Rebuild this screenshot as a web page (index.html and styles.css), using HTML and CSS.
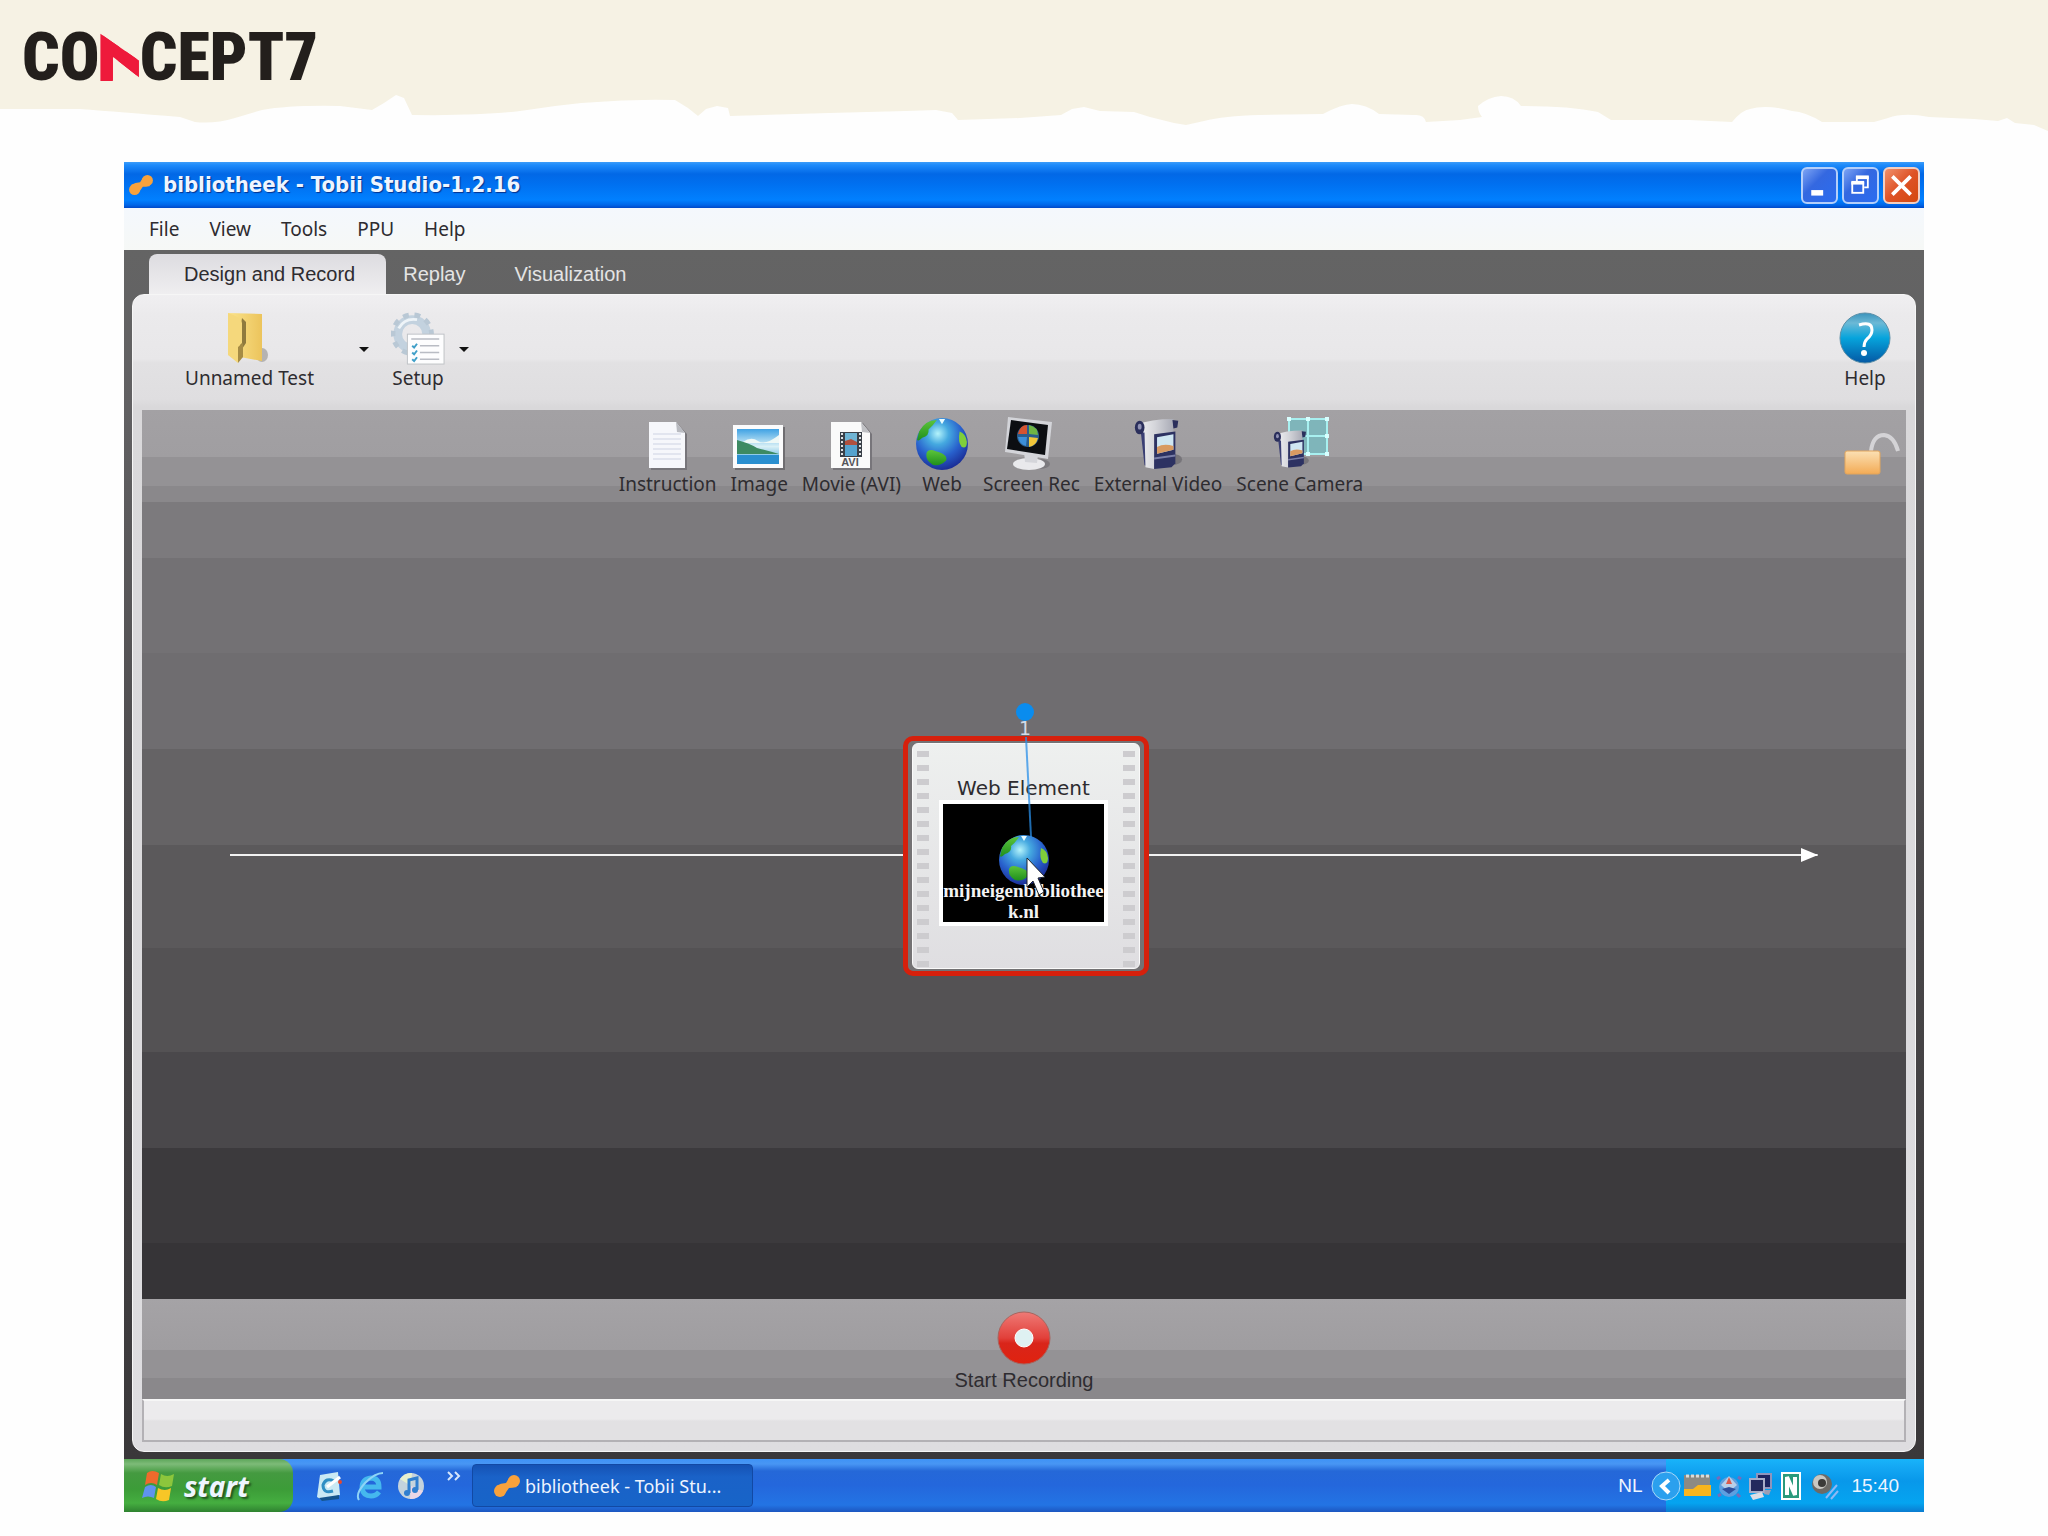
FILE: index.html
```html
<!DOCTYPE html>
<html lang="nl">
<head>
    <meta charset="UTF-8">
    <meta name="viewport" content="width=device-width, initial-scale=1.0">
    <title>bibliotheek - Tobii Studio</title>
    <link rel="stylesheet" href="styles.css">
</head>
<body>
    <!-- shared icons -->
    <svg class="defs" width="0" height="0" aria-hidden="true">
        <defs>
            <radialGradient id="sea" cx="0.42" cy="0.3" r="0.7">
                <stop offset="0" stop-color="#b4f3fb"/>
                <stop offset="0.3" stop-color="#45a9e0"/>
                <stop offset="0.65" stop-color="#2860cc"/>
                <stop offset="1" stop-color="#1b2f98"/>
            </radialGradient>
            <linearGradient id="land" x1="0" y1="0" x2="0" y2="1">
                <stop offset="0" stop-color="#5cc43a"/>
                <stop offset="1" stop-color="#1f8f1c"/>
            </linearGradient>
            <linearGradient id="body" x1="0" y1="0" x2="1" y2="0">
                <stop offset="0" stop-color="#f4f4f6"/>
                <stop offset="0.5" stop-color="#d4d5da"/>
                <stop offset="1" stop-color="#a9abb6"/>
            </linearGradient>
            <linearGradient id="sky" x1="0" y1="0" x2="0" y2="1">
                <stop offset="0" stop-color="#3fa2e4"/>
                <stop offset="0.5" stop-color="#d9f0f6"/>
                <stop offset="1" stop-color="#3aa0d8"/>
            </linearGradient>
            <linearGradient id="folder" x1="0" y1="0" x2="1" y2="0">
                <stop offset="0" stop-color="#fbe48d"/>
                <stop offset="1" stop-color="#ecc45c"/>
            </linearGradient>
            <linearGradient id="help" x1="0" y1="0" x2="0" y2="1">
                <stop offset="0" stop-color="#3b93bb"/>
                <stop offset="0.2" stop-color="#6cb9d6"/>
                <stop offset="0.5" stop-color="#06a4dc"/>
                <stop offset="1" stop-color="#0458a4"/>
            </linearGradient>
            <linearGradient id="rec" x1="0" y1="0" x2="0" y2="1">
                <stop offset="0" stop-color="#ef7a76"/>
                <stop offset="0.5" stop-color="#e2403a"/>
                <stop offset="0.6" stop-color="#d9251a"/>
                <stop offset="1" stop-color="#e0220f"/>
            </linearGradient>
            <linearGradient id="lock" x1="0" y1="0" x2="0" y2="1">
                <stop offset="0" stop-color="#fbe0b4"/>
                <stop offset="1" stop-color="#f3ab55"/>
            </linearGradient>
        </defs>
        <symbol id="globe" viewBox="0 0 52 52">
            <circle cx="26" cy="26" r="25" fill="url(#sea)"/>
            <path d="M4 14 Q10 3 21 3 Q17 9 13 12 Q14 18 7 20 Q3 24 2 22 Z" fill="url(#land)"/>
            <path d="M11 35 Q13 30 20 33 Q32 36 30 42 Q24 48 17 46 Q10 42 11 35 Z" fill="url(#land)"/>
            <path d="M43 14 Q49 16 50 24 Q50 31 45 29 Q41 24 43 14 Z" fill="#7fcf3a"/>
            <path d="M23 2 L29 2 L26 7 Z" fill="#e8fbff"/>
        </symbol>
        <symbol id="tobii" viewBox="0 0 28 24">
            <circle cx="7" cy="17" r="6" fill="#f9a23c"/>
            <circle cx="21" cy="7" r="6" fill="#f9a23c"/>
            <path d="M3 12 Q8 9 13 9 L16 4 L24 13 Q19 14 16 14 L11 21 Z" fill="#f9a23c"/>
        </symbol>
        <symbol id="camera" viewBox="0 0 52 56">
            <ellipse cx="40" cy="44" rx="11" ry="6" fill="#77757a"/>
            <path d="M8 14 L26 6 L22 52 L12 50 Z" fill="#3a3f74"/>
            <path d="M4 8 Q18 2 42 2 L42 16 L24 18 L22 54 L13 52 L12 16 L6 16 Z" fill="url(#body)"/>
            <ellipse cx="7" cy="11" rx="5" ry="7" fill="#2b2f5c"/>
            <ellipse cx="7" cy="10" rx="2" ry="3" fill="#9092b4"/>
            <path d="M41 3 L47 4 L46 11 L42 12 Z" fill="#2b2f5c"/>
            <path d="M22 18 L44 15 L44 48 L40 52 L22 54 Z" fill="#2d3262"/>
            <path d="M25 21 L42 18 L42 34 L25 38 Z" fill="#cfe6f2"/>
            <path d="M25 31 Q32 27 42 30 L42 34 L25 38 Z" fill="#d89a62"/>
            <path d="M22 42 L44 39 L44 41 L22 44 Z" fill="#7a7fa8"/>
        </symbol>
    </svg>

    <header class="site-header">
        <svg class="torn" viewBox="0 0 2048 136" preserveAspectRatio="none" aria-hidden="true">
            <path d="M0 0 H2048 V131 L2034 125 L2015 123 L2007 118 L1998 121 L1974 119 L1929 117 Q1904 112 1888 118 L1874 122 H1822 Q1806 112 1792 111 Q1766 104 1750 109 Q1742 110 1732 122 L1689 120 H1611 L1598 112 Q1570 106 1521 106 Q1514 96 1501 96 Q1488 97 1478 106 Q1478 112 1482 117 L1460 120 L1426 122 Q1424 114 1414 115 L1379 114 Q1366 104 1352 104 Q1342 104 1323 114 L1259 115 Q1224 116 1204 121 L1186 125 L1174 123 L1150 117 L1134 112 L1100 111 L1084 107 L1072 109 L1061 115 L1020 118 L958 120 L952 113 L936 110 L906 111 L829 113 L730 116 L728 108 L717 106 L706 109 L698 116 L688 108 L675 100 Q600 98 520 111 Q480 116 412 115 L404 98 L396 95 L384 103 L372 110 L340 106 Q290 105 262 110 L235 118 Q215 124 195 122 L180 117 Q120 112 80 109 H0 Z" fill="#f6f2e4"/>
        </svg>
        <div class="logo">CO<span class="logo-n">N</span>CEPT7</div>
    </header>

    <main class="window">
        <div class="title-bar">
            <svg class="title-icon" width="26" height="22"><use href="#tobii"/></svg>
            <h1>bibliotheek - Tobii Studio-1.2.16</h1>
            <div class="window-buttons">
                <button type="button" aria-label="Minimize">
                    <svg viewBox="0 0 36 36"><rect x="9" y="23" width="13" height="6" fill="#fff"/></svg>
                </button>
                <button type="button" aria-label="Restore">
                    <svg viewBox="0 0 36 36" fill="none" stroke="#fff" stroke-width="2">
                        <path d="M14 13 V9 H26 V20 H22"/><path d="M13 9 H27" stroke-width="4"/>
                        <rect x="9" y="15" width="12" height="11"/><path d="M8 15 H22" stroke-width="4"/>
                    </svg>
                </button>
                <button type="button" class="close" aria-label="Close">
                    <svg viewBox="0 0 36 36"><path d="M8 8 L28 28 M28 8 L8 28" stroke="#fff" stroke-width="4"/></svg>
                </button>
            </div>
        </div>

        <nav class="menu-bar">
            <button type="button">File</button>
            <button type="button">View</button>
            <button type="button">Tools</button>
            <button type="button">PPU</button>
            <button type="button">Help</button>
        </nav>

        <div class="app">
            <div class="tabs">
                <button type="button" class="tab active">Design and Record</button>
                <button type="button" class="tab">Replay</button>
                <button type="button" class="tab">Visualization</button>
            </div>

            <div class="panel">
                <div class="toolbar">
                    <button type="button" class="tool test">
                        <svg width="52" height="54" viewBox="0 0 52 54">
                            <ellipse cx="38" cy="44" rx="6" ry="7" fill="#b5b3b2"/>
                            <path d="M4 2 L38 3 L38 50 L16 46 L4 44 Z" fill="url(#folder)"/>
                            <path d="M18 7 L22 11 L22 32 L18 38 L17 44 L15 28 Z" fill="#8f7a3e"/>
                            <path d="M4 2 Q17 6 18 12 L18 32 L14 36 L14 52 L4 44 Z" fill="#f5d87c"/>
                            <path d="M14 36 L19 32 L19 46 L14 52 Z" fill="#a58b44"/>
                        </svg>
                        <span>Unnamed Test</span>
                    </button>
                    <button type="button" class="drop" aria-label="Choose test"></button>
                    <button type="button" class="tool setup">
                        <svg width="54" height="54" viewBox="0 0 56 54">
                            <circle cx="22" cy="23" r="15" fill="none" stroke="#c3d2df" stroke-width="9"/>
                            <circle cx="22" cy="23" r="20" fill="none" stroke="#b9c8d5" stroke-width="5" stroke-dasharray="6 6"/>
                            <path d="M8 17 Q14 6 27 8" fill="none" stroke="#eef4f8" stroke-width="3"/>
                            <rect x="17" y="23" width="38" height="31" fill="#fdfdfe" stroke="#bfc2c6"/>
                            <path d="M21 28 H50 M30 35 H50 M30 42 H50 M30 49 H50" stroke="#b9bcc4" stroke-width="1.5"/>
                            <path d="M22 35 l2 2 l3 -4 M22 42 l2 2 l3 -4 M22 49 l2 2 l3 -4" fill="none" stroke="#3f9fc8" stroke-width="2"/>
                        </svg>
                        <span>Setup</span>
                    </button>
                    <button type="button" class="drop" aria-label="Setup options"></button>
                    <button type="button" class="tool help">
                        <svg width="52" height="54" viewBox="0 0 52 54">
                            <circle cx="26" cy="27" r="25" fill="url(#help)" stroke="#5b8fa8"/>
                            <path d="M20 14 Q33 10 33 19 Q33 24 28 28 Q25 31 25 36" fill="none" stroke="#fff" stroke-width="3"/>
                            <circle cx="25" cy="42" r="3" fill="#fff"/>
                        </svg>
                        <span>Help</span>
                    </button>
                </div>

                <div class="media-bar">
                    <div class="media-tools">
                        <button type="button" class="tool">
                            <svg width="40" height="54" viewBox="0 0 40 54">
                                <path d="M3 6 H29 L39 17 V53 H3 Z" fill="#77757a"/>
                                <path d="M1 5 H28 L37 16 V51 H1 Z" fill="#f6f7fb"/>
                                <path d="M5 17 H33 M5 22 H33 M5 27 H33 M5 32 H33 M5 37 H33 M5 42 H33" stroke="#dbe0ec" stroke-width="1.5"/>
                                <path d="M28 5 L29 15 L37 16 Z" fill="#b8bac0"/>
                            </svg>
                            <span>Instruction</span>
                        </button>
                        <button type="button" class="tool">
                            <svg width="52" height="54" viewBox="0 0 52 54">
                                <rect x="2" y="10" width="50" height="43" fill="#6f6d71"/>
                                <rect x="0" y="8" width="50" height="43" fill="#fbfbfc"/>
                                <rect x="4" y="12" width="42" height="35" fill="url(#sky)"/>
                                <path d="M10 25 Q18 19 25 24 T46 18 V26 H10 Z" fill="#eef8f6"/>
                                <path d="M4 23 Q16 26 24 31 Q36 34 46 37 H4 Z" fill="#3d8a62"/>
                                <rect x="4" y="38" width="42" height="9" fill="#2a8fd0"/>
                            </svg>
                            <span>Image</span>
                        </button>
                        <button type="button" class="tool">
                            <svg width="42" height="54" viewBox="0 0 42 54">
                                <path d="M3 6 H33 L42 17 V53 H3 Z" fill="#77757a"/>
                                <path d="M1 5 H31 L40 16 V51 H1 Z" fill="#fafafa"/>
                                <path d="M31 5 L32 15 L40 16 Z" fill="#bfc0c4"/>
                                <rect x="10" y="15" width="22" height="25" fill="#3a4048"/>
                                <path d="M12 16 V40 M30 16 V40" stroke="#dfe3e6" stroke-width="2" stroke-dasharray="2 2"/>
                                <rect x="15" y="16" width="12" height="10" fill="#6fb4d4"/>
                                <rect x="15" y="28" width="12" height="11" fill="#55a3cf"/>
                                <path d="M15 24 L21 22 L27 25 V28 H15 Z" fill="#b0503e"/>
                                <text x="20" y="49" text-anchor="middle" class="avi">AVI</text>
                            </svg>
                            <span>Movie (AVI)</span>
                        </button>
                        <button type="button" class="tool">
                            <svg width="54" height="54"><use href="#globe"/></svg>
                            <span>Web</span>
                        </button>
                        <button type="button" class="tool">
                            <svg width="54" height="54" viewBox="0 0 54 54">
                                <ellipse cx="36" cy="47" rx="10" ry="5" fill="#7c7a7e"/>
                                <ellipse cx="25" cy="47" rx="16" ry="6" fill="#e9e9ec"/>
                                <path d="M20 34 L34 38 L33 46 L21 45 Z" fill="#d4d5da"/>
                                <path d="M4 0 L48 5 L44 42 L1 35 Z" fill="#d3d4d9"/>
                                <path d="M7 3 L44 8 L41 38 L3 32 Z" fill="#0c0e12"/>
                                <circle cx="24" cy="19" r="11" fill="#2b5d8c"/>
                                <path d="M14 17 Q16 8 23 8 L23 17 Z" fill="#d5532f"/>
                                <path d="M25 8 Q34 10 34 18 L25 17 Z" fill="#6fb544"/>
                                <path d="M14 20 L23 20 L22 29 Q15 27 14 20 Z" fill="#3c8fd8"/>
                                <path d="M25 20 L34 21 Q32 29 25 30 Z" fill="#f0c63a"/>
                            </svg>
                            <span>Screen Rec</span>
                        </button>
                        <button type="button" class="tool">
                            <svg width="56" height="54"><use href="#camera"/></svg>
                            <span>External Video</span>
                        </button>
                        <button type="button" class="tool">
                            <svg width="60" height="54" viewBox="0 0 60 54">
                                <rect x="19" y="2" width="38" height="35" fill="#7fb5ba" stroke="#a8f0f0" stroke-width="2"/>
                                <path d="M38 2 V37 M19 19 H57" stroke="#a8f0f0" stroke-width="2"/>
                                <path d="M17 2 h4 M36 2 h4 M55 2 h4 M55 19 h4 M55 37 h4 M36 37 h4" stroke="#d8ffff" stroke-width="4"/>
                                <use href="#camera" x="2" y="12" width="38" height="40"/>
                            </svg>
                            <span>Scene Camera</span>
                        </button>
                    </div>
                    <button type="button" class="lock" aria-label="Lock">
                        <svg width="58" height="44" viewBox="0 0 58 44">
                            <path d="M27 19 Q29 3 40 3 Q50 4 54 19" fill="none" stroke="#d4d3d6" stroke-width="4"/>
                            <rect x="1" y="19" width="35" height="23" rx="2" fill="url(#lock)" stroke="#e2a55c"/>
                        </svg>
                    </button>
                </div>

                <div class="stage">
                    <svg class="timeline" height="14" aria-hidden="true">
                        <line x1="0" y1="7" x2="100%" y2="7" stroke="#f2f2f2" stroke-width="2"/>
                    </svg>
                    <svg class="arrow" width="17" height="14" aria-hidden="true"><path d="M0 0 L17 7 L0 14 Z" fill="#fff"/></svg>
                    <div class="element">
                        <div class="card">
                            <h2>Web Element</h2>
                            <div class="thumb">
                                <svg class="thumb-globe" width="52" height="52"><use href="#globe"/></svg>
                                <p>mijneigenbibliotheek.nl</p>
                            </div>
                        </div>
                        <span class="gaze-number">1</span>
                        <svg class="gaze" width="40" height="200" viewBox="0 0 40 200" aria-hidden="true">
                            <circle cx="19" cy="9" r="9" fill="#0a8cee"/>
                            <line x1="20" y1="34" x2="25" y2="134" stroke="#2a8fe8" stroke-opacity="0.75" stroke-width="2"/>
                            <path d="M21 155 V184 L27 178 L33 192 L38 189 L32 175 L39 174 Z" fill="#fff" stroke="#20242c" stroke-width="1"/>
                        </svg>
                    </div>
                </div>

                <div class="record-bar">
                    <button type="button" class="record">
                        <svg width="54" height="54" viewBox="0 0 54 54">
                            <circle cx="27" cy="27" r="26" fill="url(#rec)" stroke="#a8645e"/>
                            <circle cx="27" cy="27" r="9" fill="#dff1f2" stroke="#fff"/>
                        </svg>
                        <span>Start Recording</span>
                    </button>
                </div>
                <div class="status"></div>
            </div>
        </div>

        <footer class="taskbar">
            <button type="button" class="start">
                <svg width="34" height="32" viewBox="0 0 34 32">
                    <path d="M5 3 Q10 -1 17 3 L15 15 Q9 11 3 15 Z" fill="#ee6a2c"/>
                    <path d="M19 4 Q25 8 32 4 L30 16 Q23 19 17 15 Z" fill="#8cc63c"/>
                    <path d="M3 17 Q9 13 14 17 L12 28 Q6 25 0 28 Z" fill="#5f93ee"/>
                    <path d="M16 18 Q23 22 29 18 L27 30 Q20 33 14 29 Z" fill="#f7c627"/>
                </svg>
                <span>start</span>
            </button>
            <div class="quick">
                <button type="button" aria-label="Show desktop">
                    <svg width="28" height="30" viewBox="0 0 28 30">
                        <path d="M5 4 L23 1 L25 24 L7 29 L2 26 Z" fill="#c9e9f4"/>
                        <path d="M4 27 L24 24 L24 28 L7 30 Z" fill="#14558c"/>
                        <path d="M19 10 Q11 6 8 14 Q8 23 18 20" fill="none" stroke="#2f8fc4" stroke-width="3"/>
                        <path d="M12 16 L25 6" stroke="#fff" stroke-width="3"/>
                        <circle cx="25" cy="11" r="2" fill="#e8472c"/>
                    </svg>
                </button>
                <button type="button" aria-label="Internet Explorer">
                    <svg width="28" height="30" viewBox="0 0 28 30">
                        <path d="M6 16 H23 Q23 7 15 7 Q6 8 6 17 Q7 25 15 25 Q20 25 23 21" fill="none" stroke="#45b8ee" stroke-width="5"/>
                        <path d="M3 29 Q-1 23 9 12 Q19 2 27 2" fill="none" stroke="#8fd4f6" stroke-width="2"/>
                    </svg>
                </button>
                <button type="button" aria-label="iTunes">
                    <svg width="28" height="30" viewBox="0 0 28 30">
                        <circle cx="14" cy="15" r="13" fill="#c4d3dd"/>
                        <path d="M14 15 L3 8 Q8 1 15 2 Z" fill="#e6efcf"/>
                        <path d="M14 15 L26 20 Q21 29 13 28 Z" fill="#ead6e6"/>
                        <path d="M12 22 V9 L20 7 V19" fill="none" stroke="#2f7fd0" stroke-width="3"/>
                        <circle cx="10" cy="22" r="3" fill="#2f7fd0"/><circle cx="18" cy="19" r="3" fill="#2f7fd0"/>
                    </svg>
                </button>
                <button type="button" class="more" aria-label="More">
                    <svg width="16" height="10" viewBox="0 0 16 10" fill="none" stroke="#d6e6fb" stroke-width="2"><path d="M2 1 L6 5 L2 9 M9 1 L13 5 L9 9"/></svg>
                </button>
            </div>
            <button type="button" class="task">
                <svg width="28" height="24"><use href="#tobii"/></svg>
                <span>bibliotheek - Tobii Stu...</span>
            </button>
            <span class="lang">NL</span>
            <div class="tray">
                <button type="button" class="expand" aria-label="Show hidden icons">
                    <svg width="30" height="30" viewBox="0 0 30 30">
                        <circle cx="15" cy="15" r="14" fill="#2ba0ee" stroke="#a8d8f8"/>
                        <path d="M18 9 L11 15 L18 22" fill="none" stroke="#fff" stroke-width="4"/>
                    </svg>
                </button>
                <svg width="28" height="28" viewBox="0 0 28 28">
                    <path d="M1 3 H27 V24 H1 Z" fill="#8c8a84"/>
                    <path d="M3 4 H26" stroke="#dcdcd8" stroke-width="3" stroke-dasharray="3 2"/>
                    <path d="M1 17 H10 L15 13 H28 V24 H1 Z" fill="#f9b51c"/>
                </svg>
                <svg width="26" height="28" viewBox="0 0 26 28">
                    <circle cx="13" cy="15" r="10" fill="#5d9fe0"/>
                    <path d="M5 13 L13 4 L21 13 L13 20 Z" fill="#b9cfe8"/>
                    <path d="M10 12 L13 5 L16 12 Z" fill="#dc5a4c"/>
                    <path d="M6 17 L13 22 L20 17 L13 15 Z" fill="#2d4f9c"/>
                    <path d="M1 7 L4 5 M22 5 L25 7 M2 24 L5 22 M21 22 L24 25" stroke="#7a6bb8" stroke-width="3"/>
                </svg>
                <svg width="26" height="28" viewBox="0 0 26 28">
                    <rect x="10" y="2" width="14" height="14" fill="#1d2460" stroke="#8f94bc" stroke-width="2"/>
                    <rect x="3" y="7" width="14" height="13" fill="#232a5e" stroke="#a9adc8" stroke-width="2"/>
                    <path d="M3 23 L15 20 L17 25 L6 28 Z" fill="#dcdde6"/>
                    <path d="M18 18 L24 18 L22 23 L17 22 Z" fill="#9c9eb4"/>
                </svg>
                <svg width="28" height="28" viewBox="0 0 28 28">
                    <rect x="4" y="1" width="18" height="26" fill="#2a9a7c" stroke="#fff" stroke-width="2"/>
                    <path d="M9 23 V5 L17 23 V5" fill="none" stroke="#fff" stroke-width="4"/>
                </svg>
                <svg width="28" height="28" viewBox="0 0 28 28">
                    <circle cx="11" cy="12" r="10" fill="#6d6a66"/>
                    <circle cx="9" cy="10" r="7" fill="#c9c7c2"/>
                    <circle cx="11" cy="11" r="4" fill="#3c3a38"/>
                    <path d="M15 26 L26 13 M20 27 L27 19" stroke="#8fb8f4" stroke-width="2"/>
                </svg>
                <time>15:40</time>
            </div>
        </footer>
    </main>
</body>
</html>
```

FILE: styles.css
```css
* {
    box-sizing: border-box;
}

body {
    display: flex;
    flex-direction: column;
    min-height: 100vh;
    margin: 0;
    padding-bottom: 24px;
    background-color: #fefefe;
    color: #2e2c30;
    font-family: "Noto Sans", "Open Sans", sans-serif;
    font-size: 19px;
    line-height: 24px;
}

button {
    margin: 0;
    padding: 0;
    border: none;
    background: none;
    color: inherit;
    font: inherit;
    cursor: pointer;
}

svg {
    display: block;
    flex-shrink: 0;
}

.defs {
    position: absolute;
}

/* header */
.site-header {
    position: relative;
    height: 162px;
    padding: 26px 22px;
}

.torn {
    position: absolute;
    top: 0;
    left: 0;
    width: 100%;
    height: 136px;
}

.logo {
    position: relative;
    color: #231f1c;
    font-family: "Roboto Condensed", "Noto Sans Condensed", "Open Sans Condensed", Roboto, sans-serif;
    font-size: 66px;
    font-weight: 900;
    line-height: 64px;
}

.logo-n {
    display: inline-block;
    background-color: #ee1a3b;
    color: #ee1a3b;
    clip-path: polygon(2% 12%, 98% 54%, 98% 80%, 33% 48%, 33% 86%, 2% 86%);
}

/* window */
.window {
    display: flex;
    flex: 1;
    flex-direction: column;
    margin: 0 124px;
}

.title-bar {
    display: flex;
    align-items: center;
    height: 46px;
    padding: 0 4px;
    background: linear-gradient(#3d9cf8 0, #1e8bfb 3px, #0268e6 12px, #0070f0 22px, #0180ff 38px, #0066e8 43px, #0048c8 46px);
}

.title-icon {
    margin-right: 9px;
}

.title-bar h1 {
    flex: 1;
    margin: 0;
    color: #eef5ff;
    font-family: "DejaVu Sans Condensed", "DejaVu Sans", sans-serif;
    font-size: 22px;
    text-shadow: 1px 1px 1px #04318c;
}

.window-buttons {
    display: flex;
    gap: 4px;
}

.window-buttons button {
    width: 37px;
    height: 37px;
    border: 2px solid #b4cffa;
    border-radius: 6px;
    background: linear-gradient(135deg, #7da4f4, #3468e0 40%, #2a6cf0);
}

.window-buttons .close {
    border-color: #f3cfc2;
    background: linear-gradient(135deg, #f0906c, #de5226 50%, #d4490f);
}

.menu-bar {
    display: flex;
    align-items: center;
    gap: 30px;
    height: 42px;
    padding: 0 25px;
    background: linear-gradient(#f4f8fd, #f6f8f6);
}

.app {
    display: flex;
    flex: 1;
    flex-direction: column;
    padding: 4px 8px 7px;
    background: linear-gradient(#646464 0, #616062 160px, #4a484a 50%, #3a383a);
}

.tabs {
    display: flex;
    padding: 0 17px;
}

.tab {
    height: 40px;
    padding: 0 17px;
    color: #e4e4e4;
    font-family: "Liberation Sans", Arial, sans-serif;
    font-size: 20px;
}

.tab:last-child {
    padding: 0 32px;
}

.tab.active {
    padding: 0 31px 0 35px;
    border-radius: 8px 8px 0 0;
    background: linear-gradient(#dddce0, #efeef0);
    color: #2e2c30;
}

.panel {
    display: flex;
    flex: 1;
    flex-direction: column;
    padding: 0 9px 9px;
    border: 1px solid #f6f6f6;
    border-radius: 12px;
    background: linear-gradient(#f0eff1 0, #ebeaec 20px, #e8e7e9 64px, #e2e1e3 68px, #dfdee0 104px, #d9d8da 112px, #dedde0);
}

.toolbar {
    display: flex;
    align-items: flex-start;
    height: 115px;
    padding: 16px 15px 0 43px;
}

.tool {
    display: flex;
    flex-direction: column;
    align-items: center;
    gap: 1px;
    white-space: nowrap;
}

.drop {
    width: 10px;
    margin-top: 36px;
    border: 5px solid transparent;
    border-top-color: #111;
    border-bottom: none;
}

.test {
    margin-right: 45px;
}

.setup {
    margin: 0 14px 0 22px;
}

.help {
    margin-left: auto;
}

.media-bar {
    display: flex;
    align-items: center;
    height: 92px;
    padding-right: 4px;
    background: linear-gradient(#a3a1a4 0, #a09ea1 47px, #949295 47px, #949295 76px, #8a888b 76px);
}

.media-tools {
    display: flex;
    flex: 1;
    justify-content: center;
    gap: 14px;
    padding-right: 4px;
}

.lock {
    margin-bottom: 4px;
}

.avi {
    fill: #55555a;
    font-family: "Liberation Sans", Arial, sans-serif;
    font-size: 11px;
    font-weight: bold;
}

/* canvas with the test timeline */
.stage {
    position: relative;
    flex: 1;
    min-height: 400px;
    background: linear-gradient(#7c7a7d 0 7%, #737174 7% 19%, #6f6d70 19% 31%, #656365 31% 43%, #5b595b 43% 56%, #545254 56% 69%, #4a484b 69% 81%, #3c3a3d 81% 93%, #363437 93%);
}

.timeline,
.arrow {
    position: absolute;
    top: 44%;
    margin-top: -5px;
}

.timeline {
    left: 5%;
    width: 90%;
}

.arrow {
    right: 5%;
}

.element {
    position: absolute;
    top: 44%;
    left: 50%;
    width: 246px;
    height: 240px;
    margin: -117px 0 0 -121px;
    padding: 2px 4px;
    border: 5px solid #d6200c;
    border-radius: 10px;
    background-color: #747274;
}

.card {
    height: 226px;
    padding: 32px 31px 0 26px;
    border: 1px solid #fafafa;
    border-radius: 6px;
    background:
        repeating-linear-gradient(transparent 0 7px, #cdcccf 7px 13px, transparent 13px 14px) 4px 0 / 12px 224px no-repeat,
        repeating-linear-gradient(transparent 0 7px, #cdcccf 7px 13px, transparent 13px 14px) 210px 0 / 12px 224px no-repeat,
        linear-gradient(#eef0ef, #dfdee1);
}

.card h2 {
    margin: 0;
    font-family: "DejaVu Sans", sans-serif;
    font-size: 20px;
    font-weight: normal;
    text-align: center;
    white-space: nowrap;
}

.thumb {
    height: 126px;
    border: 4px solid #fff;
    background-color: #000;
    color: #f4f4f4;
    font-family: "Liberation Serif", serif;
    font-size: 19px;
    font-weight: bold;
    line-height: 21px;
    text-align: center;
}

.thumb-globe {
    margin: 30px auto 0;
}

.thumb p {
    margin: -6px 0 0;
    word-break: break-all;
}

.gaze,
.gaze-number {
    position: absolute;
    top: -38px;
    left: 50%;
    margin-left: -20px;
}

.gaze-number {
    top: -25px;
    width: 38px;
    color: #d3dbe6;
    font-family: "DejaVu Sans", sans-serif;
    font-size: 19px;
    text-align: center;
}

.record-bar {
    display: flex;
    justify-content: center;
    padding: 12px 0 7px;
    background: linear-gradient(#a5a3a6 0, #9f9da0 51px, #949295 51px, #949295 79px, #8a888b 79px);
}

.record {
    display: flex;
    flex-direction: column;
    align-items: center;
    gap: 3px;
    font-family: "Liberation Sans", Arial, sans-serif;
    font-size: 20px;
}

.status {
    height: 43px;
    border: 2px solid #b3b1b5;
    border-top-color: #f6f6f6;
    background: linear-gradient(#ecebed 0 18px, #e2e1e3 20px);
}

/* taskbar */
.taskbar {
    display: flex;
    align-items: center;
    height: 53px;
    background: linear-gradient(#3f93f6 0, #4896f4 5px, #2568d8 12px, #2467dc 26px, #2374e4 46px, #1c56c0 53px);
    color: #eef5ff;
}

.start {
    display: flex;
    align-items: center;
    gap: 8px;
    width: 169px;
    height: 53px;
    padding-left: 18px;
    border-radius: 0 14px 14px 0;
    background: linear-gradient(#5da65a 0, #7dbb78 5px, #449a40 14px, #3c9c38 30px, #45ae40 44px, #2f8230 53px);
    font-size: 28px;
    font-style: italic;
    font-weight: bold;
    text-shadow: 2px 2px 2px #22551f;
}

.quick {
    display: flex;
    align-items: center;
    gap: 13px;
    width: 179px;
    padding-left: 22px;
}

.more {
    margin: 0 0 20px 8px;
}

.task {
    display: flex;
    align-items: center;
    gap: 4px;
    width: 281px;
    height: 43px;
    padding-left: 20px;
    border: 1px solid #1249a4;
    border-radius: 4px;
    background: linear-gradient(#1552b4, #1a62c8 12px, #1764c8);
    font-size: 18px;
    white-space: nowrap;
}

.lang {
    margin-left: auto;
    font-family: "Liberation Sans", Arial, sans-serif;
    font-size: 19px;
}

.tray {
    display: flex;
    align-items: center;
    gap: 5px;
    height: 53px;
    margin-left: 24px;
    padding-right: 25px;
    background: linear-gradient(#18b4fa 0, #14a8f4 8px, #0898ea 22px, #05a4f0 44px, #0a7cd0 53px);
}

.expand {
    margin: 0 -3px 0 -15px;
}

.tray time {
    margin-left: 7px;
    font-family: "Liberation Sans", Arial, sans-serif;
    font-size: 19px;
}
```
